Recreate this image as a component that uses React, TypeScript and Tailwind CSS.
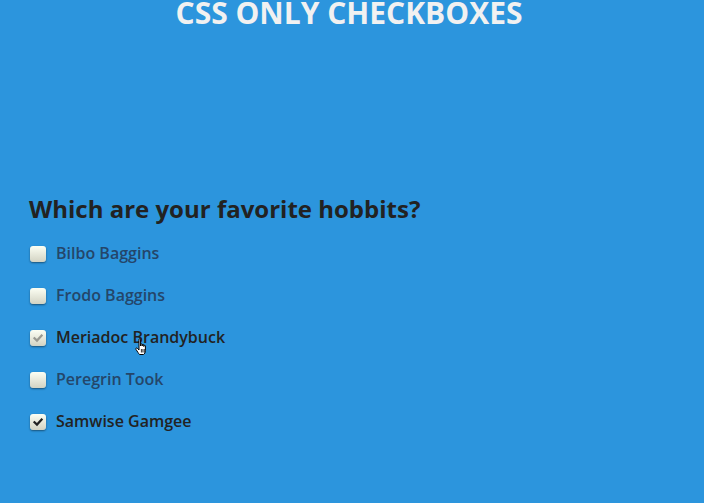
import React from "react";

const items = [
  { name: "Bilbo Baggins", state: "off" },
  { name: "Frodo Baggins", state: "off" },
  { name: "Meriadoc Brandybuck", state: "hover" },
  { name: "Peregrin Took", state: "off" },
  { name: "Samwise Gamgee", state: "on" },
];

function Box({ state }: { state: string }) {
  return (
    <div className="relative mt-[3px] h-4 w-4 shrink-0 rounded-[3px] bg-gradient-to-b from-[#fcfff4] to-[#d3d3c3] shadow-[0_1px_2px_rgba(0,0,0,0.45)]">
      {state !== "off" && (
        <svg viewBox="0 0 16 16" className="absolute inset-0 h-4 w-4">
          <path
            d="M4.5 8.2 L7 10.6 L11.6 5.6"
            fill="none"
            stroke={state === "on" ? "#222222" : "#9a9a92"}
            strokeWidth="2.2"
            strokeLinecap="square"
          />
        </svg>
      )}
    </div>
  );
}

export default function App() {
  return (
    <div
      className="relative h-[503px] w-[704px] overflow-hidden bg-[#2c95dd]"
      style={{ fontFamily: '"Open Sans", "Liberation Sans", sans-serif' }}
    >
      <h1 className="mt-[-5px] pr-[6px] text-center text-[30px] font-bold leading-[36px] text-[#f1f1f1]">
        CSS ONLY CHECKBOXES
      </h1>
      <div className="mt-[163px] pl-[29px]">
        <h2 className="text-[24px] font-bold leading-[29px] text-[#222222]">
          Which are your favorite hobbits?
        </h2>
        <ul className="mt-[20px] flex flex-col gap-[22px] pl-[1px]">
          {items.map((it) => (
            <li key={it.name} className="flex h-5 items-start gap-[10px]">
              <Box state={it.state} />
              <span
                className={
                  "text-[16px] font-semibold leading-[20px] " +
                  (it.state === "off" ? "text-[#24466a]" : "text-[#222222]")
                }
              >
                {it.name}
              </span>
            </li>
          ))}
        </ul>
      </div>
      <svg
        viewBox="0 0 16 20"
        className="absolute left-[134px] top-[338px] h-[20px] w-[16px]"
      >
        <path
          d="M5 1.5 C5 0.7 6.6 0.7 6.6 1.5 L6.6 8 L6.6 6.5 C6.6 5.8 8.2 5.8 8.2 6.5 L8.2 8 L8.2 7 C8.2 6.3 9.8 6.3 9.8 7 L9.8 8.5 L9.8 7.8 C9.8 7.1 11.4 7.1 11.4 7.8 L11.4 12.5 C11.4 14.5 10.5 16 9.5 16.5 L5.5 16.5 C4.5 15.5 3.5 13.5 2 11.5 C1.2 10.5 2.4 9.5 3.3 10.3 L5 12 Z"
          fill="#ffffff"
          stroke="#000000"
          strokeWidth="1"
          strokeLinejoin="round"
        />
        <path d="M7.4 11 L7.4 14.5 M8.9 11 L8.9 14.5 M10.3 11 L10.3 14.5" stroke="#000" strokeWidth="0.8" />
      </svg>
    </div>
  );
}
